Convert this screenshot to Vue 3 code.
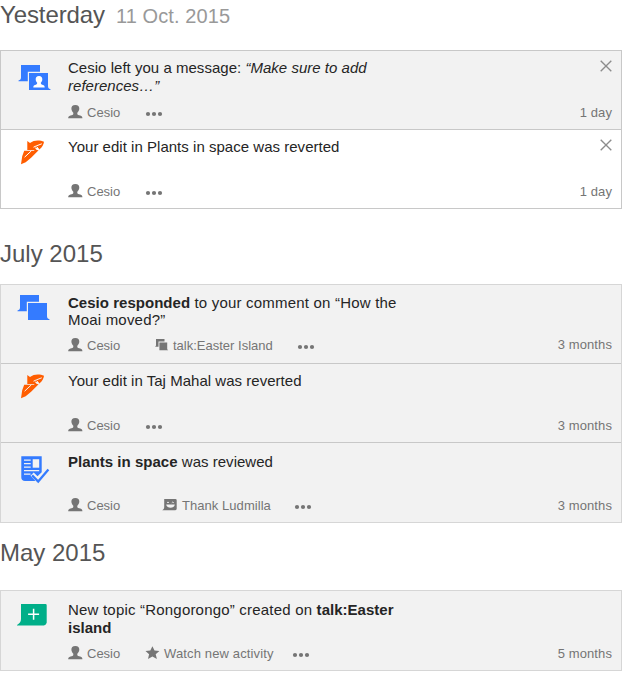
<script setup>
const groups = [
  {
    title: 'Yesterday', date: '11 Oct. 2015', name: 'yesterday',
    items: [
      { icon: 'message', lines: [[{ t: 'Cesio left you a message: ' }, { t: '“Make sure to add', k: 'quote' }], [{ t: 'references…”', k: 'quote' }]], age: '1 day', close: true },
      { icon: 'revert', lines: [[{ t: 'Your edit in Plants in space was reverted' }]], age: '1 day', close: true, read: true },
    ],
  },
  {
    title: 'July 2015', name: 'july',
    items: [
      { icon: 'talk', lines: [[{ t: 'Cesio responded', k: 'strong' }, { t: ' to your comment on “How the' }], [{ t: 'Moai moved?”' }]], action: { icon: 'pages', label: 'talk:Easter Island' }, age: '3 months' },
      { icon: 'revert', lines: [[{ t: 'Your edit in Taj Mahal was reverted' }]], age: '3 months' },
      { icon: 'review', lines: [[{ t: 'Plants in space', k: 'strong' }, { t: ' was reviewed' }]], action: { icon: 'thank', label: 'Thank Ludmilla' }, age: '3 months' },
    ],
  },
  {
    title: 'May 2015', name: 'may',
    items: [
      { icon: 'topic', lines: [[{ t: 'New topic “Rongorongo” created on ' }, { t: 'talk:Easter', k: 'strong' }], [{ t: 'island', k: 'strong' }]], action: { icon: 'star', label: 'Watch new activity' }, age: '5 months' },
    ],
  },
]
</script>

<template>
  <main class="feed">
    <section v-for="g in groups" :key="g.name" class="group" :class="g.name">
      <h2 class="heading">{{ g.title }}<span v-if="g.date" class="date">{{ g.date }}</span></h2>
      <ul class="list">
        <li v-for="(n, i) in g.items" :key="i" class="row" :class="[n.icon, { read: n.read }]">
          <div class="kind">
            <svg v-if="n.icon === 'message' || n.icon === 'talk'" width="36" height="32" viewBox="0 0 36 32">
              <path fill="#347bff" d="M5 5H24V11.7H11.8V21.3H2.5V20.6C4.3 20 5 19.2 5 17.5Z" />
              <path fill="#347bff" d="M13 13H32V26C32 27.8 32.8 28.8 34.6 29.4V30H13Z" />
              <path v-if="n.icon === 'message'" fill="#fff" d="M23 16C20.7 16 19.6 17.5 19.7 19.4C19.8 21.1 20.6 22.1 21.2 22.8C21.2 24.2 20.6 24.5 19.2 25C17.8 25.4 17.3 26 17.3 27.4H28.7C28.7 26 28.2 25.4 26.8 25C25.4 24.5 24.8 24.2 24.8 22.8C25.4 22.1 26.2 21.1 26.3 19.4C26.4 17.5 25.3 16 23 16Z" />
            </svg>
            <svg v-else-if="n.icon === 'revert'" width="36" height="32" viewBox="0 0 36 32">
              <path fill="#ff5d00" d="M11.3 6L14 8.1C18 4.8 24 5.1 28 6.8C27.7 9.6 26.3 12.2 23.4 14.6L21.9 12.9L18.6 12.5L20.7 14.9H11.3Z" />
              <path fill="#ff5d00" d="M8.2 15.8H17.8L19 14.7L22.6 15.2L15.1 22.8L9.7 27.3L5 29.3L6.2 21.2Z" />
              <path d="M8.6 22.2L15.4 15.8M17.5 12.2L20.3 10.9L25.8 8.8M20.6 11.8L22.6 13.6" class="slit" />
            </svg>
            <svg v-else-if="n.icon === 'review'" width="36" height="32" viewBox="0 0 36 32">
              <path fill="#347bff" d="M5.3 1.3H25.7V17.2L21.5 21.2L17.7 17.4L14.5 20.7L19.1 25.6L18.8 26H9C6.7 26 5.3 24.5 5.3 22.4Z" />
              <path d="M8 5.2H14.7M8 8.7H14.7M8 12.2H14.7M8 15.7H23.2M8 19.2H14.5" stroke="#f2f2f2" stroke-width="1.2" />
              <path fill="#f2f2f2" d="M16.7 4.2H23.2V12.7H16.7Z" />
              <path fill="none" stroke="#347bff" stroke-width="2.3" d="M16.1 20.4L22.2 26.6L32.4 14.6" />
            </svg>
            <svg v-else width="36" height="32" viewBox="0 0 36 32">
              <path fill="#00af89" d="M5 4H29.5Q30.7 4 30.7 5.2V22.8Q30.2 25 28 25.6H1V25C3.5 23.5 5 22 5 19Z" />
              <path d="M17.6 8.7V19.7M12.1 14.2H23.1" stroke="#fff" stroke-width="1.5" />
            </svg>
          </div>
          <div class="body">
            <p class="message">
              <span v-for="(line, l) in n.lines" :key="l" class="line"><span v-for="(s, k) in line" :key="k" :class="s.k || 'plain'">{{ s.t }}</span></span>
            </p>
            <div class="meta">
              <span class="user">
                <svg width="15" height="14" viewBox="0 0 15 14"><path fill="#757575" d="M7.3.1C4.5.1 3.3 1.6 3.4 3.8C3.5 5.6 4.4 6.9 5.3 7.8V9C5.3 10 4 10.2 2.5 10.6C.8 11.1.2 11.9.2 13.3H14.4C14.4 11.9 13.9 11.1 12.2 10.6C10.7 10.2 9.3 10 9.3 9V7.8C10.2 6.9 11.2 5.6 11.3 3.8C11.4 1.6 10.2.1 7.3.1Z" /></svg>
                <span class="name">Cesio</span>
              </span>
              <span v-if="n.action" class="action" :class="n.action.icon">
                <svg v-if="n.action.icon === 'pages'" width="15" height="14" viewBox="0 0 15 14"><path fill="#757575" d="M1 1H9.5V3.4H3.5V8.8H0C.8 8.3 1 7.8 1 6.8ZM4.4 4.4H12.2V10.2C12.2 11.2 12.5 11.8 13.3 12.2H4.4Z" /></svg>
                <svg v-else-if="n.action.icon === 'thank'" width="16" height="14" viewBox="0 0 16 14">
                  <path fill="#757575" d="M2.2 1H13.4Q14.7 1 14.7 2.3V10.8Q14.7 12.2 13.3 12.2H.2C1.7 11.2 2.2 10.4 2.2 9Z" />
                  <path fill="none" stroke="#f2f2f2" stroke-width=".9" d="M5 4.8Q6 3.2 7 4.8M9.8 4.8Q10.8 3.2 11.8 4.8" />
                  <path fill="#f2f2f2" d="M4.2 6.4H12.8C12.3 10.8 4.8 10.8 4.2 6.4Z" />
                </svg>
                <svg v-else width="15" height="14" viewBox="0 0 15 14"><path fill="#757575" d="M7.4.2L9.5 4.6L14.4 5.1L10.7 8.3L11.9 13.1L7.4 10.6L3 13.1L4.1 8.3L.5 5.1L5.3 4.6Z" /></svg>
                <span class="label">{{ n.action.label }}</span>
              </span>
              <svg class="more" width="18" height="6" viewBox="0 0 18 6"><g fill="#757575"><circle cx="3" cy="3" r="2.1" /><circle cx="9" cy="3" r="2.1" /><circle cx="15" cy="3" r="2.1" /></g></svg>
              <span class="age">{{ n.age }}</span>
            </div>
          </div>
          <svg v-if="n.close" class="close" width="12" height="12" viewBox="0 0 12 12"><path d="M.7.7L11.3 11.3M11.3.7L.7 11.3" stroke="#8c8c8c" stroke-width="1.35" /></svg>
        </li>
      </ul>
    </section>
  </main>
</template>

<style>
body { margin: 0; background: #fff; }
</style>

<style scoped>
.feed { width: 622px; height: 679px; overflow: hidden; font-family: "Liberation Sans", Arial, sans-serif; color: #252525; }
.heading { margin: 0; height: 50px; font-size: 24px; font-weight: 400; line-height: 30px; color: #555; white-space: nowrap; }
.yesterday .heading { letter-spacing: -0.1px; }
.date { margin-left: 11px; font-size: 20px; letter-spacing: 0.1px; color: #999; }
.july .heading { height: 45px; padding-top: 30px; }
.may .heading { height: 52px; padding-top: 15px; }
.list { margin: 0; padding: 0; list-style: none; border: 1px solid #c8c8c8; border-top: 0; }
.july .list, .may .list { border-color: #d6d6d6; }
.row { position: relative; display: flex; box-sizing: border-box; height: 79px; border-top: 1px solid #c8c8c8; background: #f2f2f2; }
.row.read { background: #fff; }
.row.review, .row.topic { height: 80px; }
.july .row:first-child, .may .row { border-color: #d6d6d6; }
.kind { width: 67px; box-sizing: border-box; padding: 9px 0 0 15px; }
.kind svg { display: block; }
.revert .kind { padding-top: 5px; }
.talk .kind { padding: 5px 0 0 14px; }
.review .kind { padding-top: 12px; }
.topic .kind { padding-top: 9px; }
.body { flex: 1; display: flex; flex-direction: column; justify-content: space-between; padding: 8px 9px 7px 0; }
.message { margin: 0; font-size: 15px; line-height: 18px; letter-spacing: 0.025px; white-space: nowrap; }
.line { display: block; white-space: pre; }
.quote { font-style: italic; }
.strong { font-weight: 700; }
.talk .body { padding: 9px 9px 8px 0; }
.talk .message { line-height: 17px; }
.talk .plain { letter-spacing: 0.2px; }
.review .body { padding: 10px 9px 7px 0; }
.topic .body { padding: 10px 9px 7px 0; }
.topic .plain { letter-spacing: 0.2px; }
.meta { display: flex; align-items: center; height: 18px; font-size: 13px; line-height: 18px; color: #757575; white-space: nowrap; }
.user, .action { display: flex; align-items: center; }
.user { width: 79px; }
.user svg, .action svg { margin-top: -2px; }
.name { margin-left: 4px; }
.action { margin-left: 8px; }
.label { margin-left: 3px; }
.action.thank { margin-left: 15px; }
.thank .label { margin-left: 4px; letter-spacing: 0.05px; }
.action.star { margin-left: -2px; }
.star .label { margin-left: 4px; letter-spacing: 0.14px; }
.more { margin: 2px 0 0 -2px; }
.action + .more { margin-left: 24px; }
.action.thank + .more { margin-left: 23px; }
.action.star + .more { margin-left: 18px; }
.age { margin-left: auto; letter-spacing: 0.1px; }
.talk .age { margin-top: -2px; }
.close { position: absolute; top: 9px; right: 9px; }
.slit { fill: none; stroke: #f2f2f2; stroke-width: 1; }
.read .slit { stroke: #fff; }
</style>
